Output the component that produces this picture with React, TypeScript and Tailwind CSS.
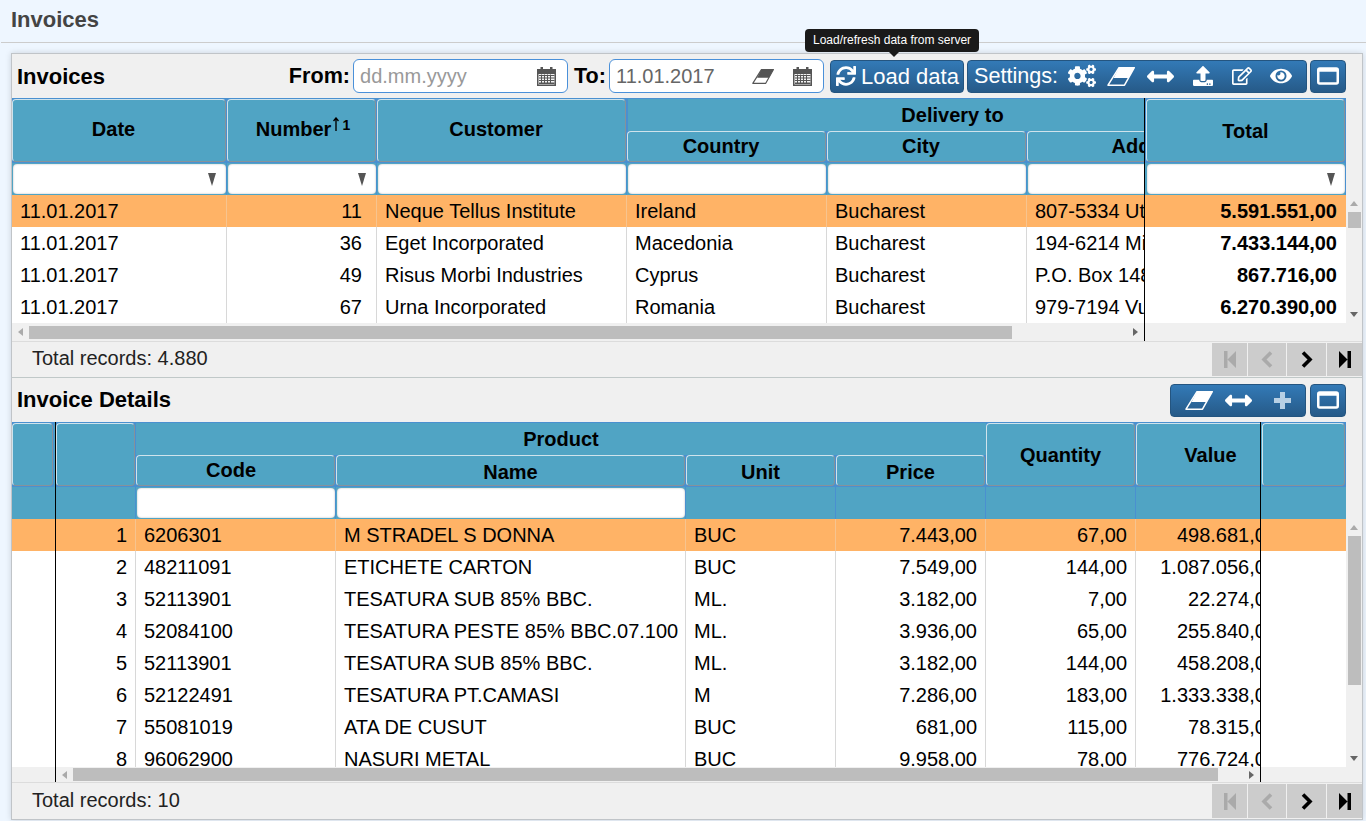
import { FaArrowsAltH, FaCogs, FaEye, FaRegEdit, FaSync, FaUpload } from 'react-icons/fa';

const btn = 'flex items-center h-[33px] rounded-[4px] border border-[#245580] bg-gradient-to-b from-[#337ab7] to-[#265a88] text-white';
const cellBase = 'h-8 shrink-0 px-2 leading-8 whitespace-nowrap overflow-hidden border-r';

function Eraser({ color = 'white', w = 28, h = 19 }: { color?: string; w?: number; h?: number }) {
    return (
        <svg width={w} height={h} viewBox="0 0 28 19">
            <path d="M12 0.7H27.3L21.5 11H6.5Z" fill={color} />
            <path d="M12 0.7H27.3L17.5 18.2H1Z" fill="none" stroke={color} strokeWidth="1.5" strokeLinejoin="round" />
        </svg>
    );
}

function Calendar() {
    return (
        <svg width="19" height="20" viewBox="0 0 19 20" fill="#555">
            <path d="M0 3H3.5V1H6V3H13V1H15.5V3H19V20H0Z" />
            <path d="M1.5 8H17.5V18.5H1.5Z" fill="#f4f4f4" />
            <path d="M2 9H17.5V10H2ZM2 11.5H17.5V12.5H2ZM2 14H17.5V15H2ZM2 16.5H17.5V18H2Z" />
            <path d="M4 8.5H5V18H4ZM7 8.5H8V18H7ZM10 8.5H11V18H10ZM13 8.5H14V18H13Z" />
        </svg>
    );
}

function WindowIcon() {
    return (
        <svg width="22" height="18" viewBox="0 0 22 18" fill="none">
            <rect x="1.25" y="1.5" width="19.5" height="15" rx="1.5" stroke="white" strokeWidth="2.5" />
            <path d="M1 3H21" stroke="white" strokeWidth="3.5" />
        </svg>
    );
}

function DateInput({ value, placeholder, eraser }: { value?: string; placeholder?: string; eraser?: boolean }) {
    return (
        <div className="flex items-center w-[215px] h-[34px] bg-white border border-[#4a90d9] rounded-[6px] pl-[6px] pr-[11px]">
            <input readOnly value={value ?? ''} placeholder={placeholder} className="w-[130px] flex-1 min-w-0 text-[20px] text-[#666] placeholder:text-[#999] outline-none bg-transparent" />
            {eraser && <span className="mr-[19px] flex"><Eraser color="#555" w={22} h={15} /></span>}
            <Calendar />
        </div>
    );
}

function HeadCell({ w, h = 'h-full', children }: { w: string; h?: string; children?: React.ReactNode }) {
    return (
        <div className={`${w} ${h} shrink-0 pr-px pb-px bg-[#4a90d0]`}>
            <div className="w-full h-full bg-[#50a4c4] flex items-center justify-center font-bold rounded-[4px] border border-t-[#cfe3ec] border-l-[#cfe3ec] border-r-[#86929a] border-b-[#86929a]">
                {children}
            </div>
        </div>
    );
}

function Filter({ w, select, empty }: { w: string; select?: boolean; empty?: boolean }) {
    return (
        <div className={`${w} h-full shrink-0 pl-px py-px border-r border-[#4a90d0]`}>
            {!empty && (
                <div className="relative h-full bg-white rounded-[4px] shadow-[inset_0_0_2px_rgba(0,0,0,0.3)]">
                    {select && <span className="absolute right-[10px] top-[9px] w-0 h-0 border-x-[4px] border-x-transparent border-t-[13px] border-t-[#555]" />}
                </div>
            )}
        </div>
    );
}

function Row({ cols, cells, active }: { cols: { w: string; right?: string }[]; cells: string[]; active?: boolean }) {
    return (
        <div className={`flex h-8 ${active ? 'bg-[#ffb366]' : 'bg-white'}`}>
            {cols.map((c, i) => (
                <div key={i} className={`${cellBase} ${c.w} ${c.right ?? ''} ${active ? 'border-[#f7c48f]' : 'border-[#d8d8d8]'}`}>{cells[i]}</div>
            ))}
        </div>
    );
}

function Tri({ dir }: { dir: 'up' | 'down' | 'left' | 'right' }) {
    const cls = {
        up: 'border-x-[4px] border-x-transparent border-b-[5px] border-b-[#aaa]',
        down: 'border-x-[4px] border-x-transparent border-t-[5px] border-t-[#666]',
        left: 'border-y-[4px] border-y-transparent border-r-[5px] border-r-[#aaa]',
        right: 'border-y-[4px] border-y-transparent border-l-[5px] border-l-[#666]',
    }[dir];
    return <span className={`w-0 h-0 ${cls}`} />;
}

function HScroll({ h, thumb }: { h: string; thumb: string }) {
    return (
        <div className={`${h} flex items-center bg-[#f0f0f0]`}>
            <div className="w-[17px] flex justify-center"><Tri dir="left" /></div>
            <div className={`${thumb} h-[13px] bg-[#bdbdbd]`} />
            <div className="flex-1" />
            <div className="w-[17px] flex justify-center"><Tri dir="right" /></div>
        </div>
    );
}

function VScroll({ thumb, top }: { thumb: string; top: string }) {
    return (
        <div className={`${top} w-4 shrink-0 flex flex-col items-center`}>
            <div className="h-[17px] flex items-center"><Tri dir="up" /></div>
            <div className={`${thumb} w-[13px] bg-[#bdbdbd]`} />
            <div className="flex-1" />
            <div className="h-[17px] flex items-center"><Tri dir="down" /></div>
        </div>
    );
}

function Pager({ h }: { h: string }) {
    return (
        <div className={`flex gap-px ${h}`}>
            <div className="w-[35px] bg-[#ccc] flex items-center justify-center">
                <svg width="12" height="17" viewBox="0 0 12 17" fill="#aaa"><path d="M0 0H3.5V17H0ZM12 0V17L3.5 8.5Z" /></svg>
            </div>
            <div className="w-[38px] bg-[#ccc] flex items-center justify-center">
                <svg width="12" height="17" viewBox="0 0 12 17" fill="none" stroke="#aaa" strokeWidth="3.6"><path d="M10 1.5L3 8.5L10 15.5" /></svg>
            </div>
            <div className="w-[39px] bg-[#ccc] flex items-center justify-center">
                <svg width="12" height="17" viewBox="0 0 12 17" fill="none" stroke="black" strokeWidth="3.6"><path d="M2 1.5L9 8.5L2 15.5" /></svg>
            </div>
            <div className="w-[35px] bg-[#ccc] flex items-center justify-center">
                <svg width="12" height="17" viewBox="0 0 12 17" fill="black"><path d="M0 0L8.5 8.5L0 17ZM8.5 0H12V17H8.5Z" /></svg>
            </div>
        </div>
    );
}

function Footer({ text, h, pager, textClass }: { text: string; h: string; pager: string; textClass: string }) {
    return (
        <div className={`${h} box-border flex items-center justify-between pl-5 border-t border-[#dcdcdc]`}>
            <span className={`text-[#222] ${textClass}`}>{text}</span>
            <Pager h={pager} />
        </div>
    );
}

const invCols = [
    { w: 'w-[215px]' },
    { w: 'w-[150px]', right: 'text-right pr-[14px]' },
    { w: 'w-[250px]' },
    { w: 'w-[200px]' },
    { w: 'w-[200px]' },
    { w: 'w-[250px]' },
];

const invoices = [
    { cells: ['11.01.2017', '11', 'Neque Tellus Institute', 'Ireland', 'Bucharest', '807-5334 Ut Avenue'], total: '5.591.551,00', active: true },
    { cells: ['11.01.2017', '36', 'Eget Incorporated', 'Macedonia', 'Bucharest', '194-6214 Mi Street'], total: '7.433.144,00' },
    { cells: ['11.01.2017', '49', 'Risus Morbi Industries', 'Cyprus', 'Bucharest', 'P.O. Box 148, 812'], total: '867.716,00' },
    { cells: ['11.01.2017', '67', 'Urna Incorporated', 'Romania', 'Bucharest', '979-7194 Vulputate Rd'], total: '6.270.390,00' },
];

const detCols = [
    { w: 'w-[80px]', right: 'text-right' },
    { w: 'w-[200px]' },
    { w: 'w-[350px]' },
    { w: 'w-[150px]' },
    { w: 'w-[150px]', right: 'text-right' },
    { w: 'w-[150px]', right: 'text-right' },
    { w: 'w-[150px]', right: 'text-right' },
];

const details = [
    ['1', '6206301', 'M STRADEL S DONNA', 'BUC', '7.443,00', '67,00', '498.681,00'],
    ['2', '48211091', 'ETICHETE CARTON', 'BUC', '7.549,00', '144,00', '1.087.056,00'],
    ['3', '52113901', 'TESATURA SUB 85% BBC.', 'ML.', '3.182,00', '7,00', '22.274,00'],
    ['4', '52084100', 'TESATURA PESTE 85% BBC.07.100', 'ML.', '3.936,00', '65,00', '255.840,00'],
    ['5', '52113901', 'TESATURA SUB 85% BBC.', 'ML.', '3.182,00', '144,00', '458.208,00'],
    ['6', '52122491', 'TESATURA PT.CAMASI', 'M', '7.286,00', '183,00', '1.333.338,00'],
    ['7', '55081019', 'ATA DE CUSUT', 'BUC', '681,00', '115,00', '78.315,00'],
    ['8', '96062900', 'NASURI METAL', 'BUC', '9.958,00', '78,00', '776.724,00'],
];

export default function App() {
    return (
        <div className="relative w-[1366px] h-[821px] overflow-hidden bg-[#eef6ff] font-['Liberation_Sans',Arial,sans-serif] text-[20px] text-black">
            <div className="h-[43px] ml-px border-b border-[#cccccc] pl-[10px] flex items-center pb-[3px] text-[22px] font-bold text-[#444]">Invoices</div>

            <div className="ml-[11px] mt-[10px] w-[1352px] h-[767px] border border-[#c0c4c8] bg-[#f0f0f0] shadow-[0_0_6px_rgba(0,0,0,0.15)] overflow-hidden">
                {/* invoices */}
                <div className="h-[44px] flex items-center pl-[5px] pr-4">
                    <span className="text-[22px] font-bold">Invoices</span>
                    <span className="ml-auto text-[21.6px] font-bold mr-[3px]">From:</span>
                    <DateInput placeholder="dd.mm.yyyy" />
                    <span className="ml-[6px] mr-[3px] text-[21.6px] font-bold">To:</span>
                    <DateInput value="11.01.2017" eraser />
                    <button className={`${btn} ml-[6px] w-[134px] text-[22px] pl-[5px] gap-[5px]`}><FaSync size={20} /><span>Load data</span></button>
                    <div className={`${btn} ml-[3px] w-[340px] text-[21.6px] pl-[6px]`}>
                        <span className="w-[88px]">Settings:</span>
                        <span className="w-[39px] flex justify-center"><FaCogs size={28} /></span>
                        <span className="w-[40px] flex justify-center"><Eraser /></span>
                        <span className="w-[39px] flex justify-center"><FaArrowsAltH size={27} /></span>
                        <span className="ml-[3px] w-[39px] flex justify-center"><FaUpload size={20} /></span>
                        <span className="w-[39px] flex justify-center"><FaRegEdit size={20} /></span>
                        <span className="w-[39px] flex justify-center"><FaEye size={22} /></span>
                    </div>
                    <button className={`${btn} ml-[3px] w-[36px] justify-center`}><WindowIcon /></button>
                </div>

                <div className="flex h-[243px]">
                    <div className="w-[1132px] shrink-0 overflow-hidden">
                        <div className="w-[1265px]">
                            <div className="h-[65px] flex bg-[#50a4c4] border-t border-[#4a90d0] font-bold">
                                <HeadCell w="w-[215px]"><span className="mr-[11px] pb-[4px]">Date</span></HeadCell>
                                <HeadCell w="w-[150px]">
                                    <span className="pb-[4px] ml-[3px]">Number</span>
                                    <span className="flex items-start -mt-[13px] ml-[2px] text-[14px] leading-none">
                                        <svg width="6" height="14" viewBox="0 0 6 14" fill="none" stroke="black" strokeWidth="1.4"><path d="M3 14V1M0.5 4L3 1L5.5 4" /></svg>
                                        <span className="ml-[3px] mt-[1px]">1</span>
                                    </span>
                                </HeadCell>
                                <HeadCell w="w-[250px]"><span className="mr-[11px] pb-[4px]">Customer</span></HeadCell>
                                <div className="w-[650px] shrink-0 flex flex-col">
                                    <div className="h-[32px] flex items-center justify-center border-l border-[#4a90d0]">Delivery to</div>
                                    <div className="h-[32px] flex">
                                        <HeadCell w="w-[200px]"><span className="mr-[11px] pb-[2px]">Country</span></HeadCell>
                                        <HeadCell w="w-[200px]"><span className="mr-[11px] pb-[2px]">City</span></HeadCell>
                                        <HeadCell w="w-[250px]"><span className="pb-[2px]">Address</span></HeadCell>
                                    </div>
                                </div>
                            </div>
                            <div className="h-[32px] flex bg-[#50a4c4]">
                                <Filter w="w-[215px]" select />
                                <Filter w="w-[150px]" select />
                                <Filter w="w-[250px]" />
                                <Filter w="w-[200px]" />
                                <Filter w="w-[200px]" />
                                <Filter w="w-[250px]" />
                            </div>
                            <div className="h-[128px] overflow-hidden">
                                {invoices.map((r) => <Row key={r.cells[1]} cols={invCols} cells={r.cells} active={r.active} />)}
                            </div>
                        </div>
                        <HScroll h="h-[18px]" thumb="w-[983px]" />
                    </div>
                    <div className="w-px shrink-0 bg-black" />
                    <div className="w-[201px] shrink-0">
                        <div className="h-[65px] pl-px bg-[#4a90d0] border-t border-[#4a90d0] font-bold">
                            <HeadCell w="w-[200px]"><span className="pt-[1px]">Total</span></HeadCell>
                        </div>
                        <div className="h-[32px] pl-px bg-[#50a4c4]">
                            <Filter w="w-[200px]" select />
                        </div>
                        {invoices.map((r) => (
                            <div key={r.total} className={`h-8 pl-px text-right font-bold pr-[9px] leading-8 ${r.active ? 'bg-[#ffb366]' : 'bg-white'}`}>{r.total}</div>
                        ))}
                    </div>
                    <VScroll top="mt-[97px] h-[128px]" thumb="h-4" />
                </div>

                <Footer text="Total records: 4.880" h="h-[37px] border-b border-b-[#c0c8c8]" pager="h-[33px]" textClass="-mt-[4px]" />

                {/* invoice details */}
                <div className="h-[44px] flex items-center pl-[5px] pr-4">
                    <span className="text-[22px] font-bold -mt-[2px]">Invoice Details</span>
                    <div className={`${btn} ml-auto w-[136px] pl-[14px]`}>
                        <Eraser />
                        <span className="ml-[12px] flex"><FaArrowsAltH size={27} /></span>
                        <span className="ml-[22px] flex">
                            <svg width="17" height="17" viewBox="0 0 17 17" fill="#b8d0e4"><path d="M6 0H11V6H17V11H11V17H6V11H0V6H6Z" /></svg>
                        </span>
                    </div>
                    <button className={`${btn} ml-[4px] w-[36px] justify-center`}><WindowIcon /></button>
                </div>

                <div className="flex h-[360px]">
                    <div className="w-[43px] shrink-0">
                        <div className="h-[65px] bg-[#50a4c4] border-t border-[#4a90d0]"><HeadCell w="w-[42px]" /></div>
                        <div className="h-[32px] bg-[#50a4c4]" />
                        {details.slice(0, 7).map((r, i) => <div key={r[0]} className={`h-8 ${i === 0 ? 'bg-[#ffb366]' : 'bg-white'}`} />)}
                        <div className="h-6 bg-white" />
                    </div>
                    <div className="w-px shrink-0 bg-black" />
                    <div className="w-[1204px] shrink-0 overflow-hidden">
                        <div className="w-[1230px]">
                            <div className="h-[65px] flex bg-[#50a4c4] border-t border-[#4a90d0] font-bold">
                                <HeadCell w="w-[80px]" />
                                <div className="w-[850px] shrink-0 flex flex-col">
                                    <div className="h-[32px] flex items-center justify-center">Product</div>
                                    <div className="h-[32px] flex">
                                        <HeadCell w="w-[200px]"><span className="mr-[9px] pb-[2px]">Code</span></HeadCell>
                                        <HeadCell w="w-[350px]"><span className="pt-[2px]">Name</span></HeadCell>
                                        <HeadCell w="w-[150px]"><span className="pt-[2px]">Unit</span></HeadCell>
                                        <HeadCell w="w-[150px]"><span className="pt-[2px]">Price</span></HeadCell>
                                    </div>
                                </div>
                                <HeadCell w="w-[150px]">Quantity</HeadCell>
                                <HeadCell w="w-[150px]">Value</HeadCell>
                            </div>
                            <div className="h-[32px] flex bg-[#50a4c4]">
                                <Filter w="w-[80px]" empty />
                                <Filter w="w-[200px]" />
                                <Filter w="w-[350px]" />
                                <Filter w="w-[150px]" empty />
                                <Filter w="w-[150px]" empty />
                                <Filter w="w-[150px]" empty />
                                <Filter w="w-[150px]" empty />
                            </div>
                            <div className="h-[248px] overflow-hidden">
                                {details.map((r, i) => <Row key={r[0]} cols={detCols} cells={r} active={i === 0} />)}
                            </div>
                        </div>
                        <HScroll h="h-[15px]" thumb="w-[1145px]" />
                    </div>
                    <div className="w-px shrink-0 bg-black" />
                    <div className="w-[85px] shrink-0">
                        <div className="h-[65px] pl-px bg-[#50a4c4] border-t border-[#4a90d0]"><HeadCell w="w-[84px]" /></div>
                        <div className="h-[32px] bg-[#50a4c4]" />
                        <div className="h-8 bg-[#ffb366]" />
                        <div className="h-[216px] bg-white" />
                    </div>
                    <VScroll top="mt-[97px] h-[248px]" thumb="h-[149px]" />
                </div>

                <Footer text="Total records: 10" h="h-[37px]" pager="h-[34px]" textClass="-mt-[2px]" />
            </div>

            <div className="absolute left-[805px] top-[29px] h-[23px] px-2 rounded-[4px] bg-[#1a1a1a] text-white text-[12px] leading-[23px] whitespace-nowrap">
                Load/refresh data from server
                <span className="absolute left-[84px] -bottom-[5px] w-0 h-0 border-x-[5px] border-x-transparent border-t-[5px] border-t-[#1a1a1a]" />
            </div>
        </div>
    );
}
